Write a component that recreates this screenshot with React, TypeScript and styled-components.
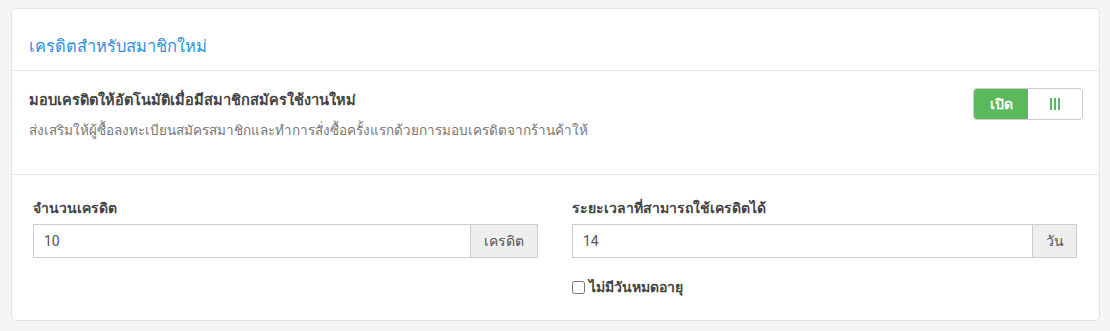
import styled, { createGlobalStyle } from 'styled-components';

const GlobalStyle = createGlobalStyle`
  body {
    margin: 0;
    background: #f5f5f5;
    font-family: "Noto Sans", "Open Sans", sans-serif;
    color: #444;
  }
`;

const Page = styled.div`
  padding: 8px 10px 10px 11px;
`;

const Card = styled.div`
  background: #fff;
  border: 1px solid #e3e3e3;
  border-radius: 5px;
`;

const Header = styled.div`
  height: 61px;
  display: flex;
  align-items: center;
  padding: 0 17px;
  border-bottom: 1px solid #e6e6e6;
`;

const Title = styled.h3`
  margin: 0;
  padding-top: 12px;
  font-size: 16.5px;
  font-weight: 500;
  color: #2f8fdd;
`;

const Section = styled.div`
  display: flex;
  justify-content: space-between;
  align-items: flex-start;
  height: 104px;
  box-sizing: border-box;
  padding: 17px 16px 0 17px;
  border-bottom: 1px solid #e6e6e6;
`;

const Texts = styled.div`
  display: flex;
  flex-direction: column;
  gap: 10px;
`;

const Strong = styled.div`
  font-size: 14.6px;
  font-weight: 700;
  color: #444;
  line-height: 22px;
`;

const Hint = styled.div`
  font-size: 13.5px;
  color: #777;
  line-height: 20px;
`;

const Toggle = styled.div`
  display: flex;
  width: 110px;
  height: 32px;
  border: 1px solid #ccc;
  border-radius: 4px;
  overflow: hidden;
  box-sizing: border-box;
`;

const ToggleOn = styled.div`
  width: 54px;
  background: #5cb85c;
  color: #fff;
  font-size: 14px;
  font-weight: 700;
  display: flex;
  align-items: center;
  justify-content: center;
`;

const ToggleOff = styled.div`
  flex: 1;
  display: flex;
  align-items: center;
  justify-content: center;
  gap: 2px;
`;

const Bar = styled.span`
  width: 2px;
  height: 12px;
  background: #5cb85c;
`;

const Fields = styled.div`
  display: grid;
  grid-template-columns: 1fr 1fr;
  column-gap: 34px;
  padding: 23px 22px 22px 21px;
`;

const Field = styled.div`
  display: flex;
  flex-direction: column;
`;

const Label = styled.label`
  font-size: 14px;
  font-weight: 700;
  color: #444;
  line-height: 20px;
  margin-bottom: 6px;
`;

const Group = styled.div`
  display: flex;
  height: 34px;
`;

const Input = styled.input`
  flex: 1;
  min-width: 0;
  box-sizing: border-box;
  height: 34px;
  border: 1px solid #ccc;
  border-right: none;
  padding: 0 10px;
  font-size: 14px;
  font-family: "Roboto", "Noto Sans", sans-serif;
  color: #555;
  outline: none;
`;

const Addon = styled.span<{ $w: number }>`
  width: ${(p) => p.$w}px;
  box-sizing: border-box;
  height: 34px;
  border: 1px solid #ccc;
  background: #eee;
  display: flex;
  align-items: center;
  justify-content: center;
  font-size: 14px;
  color: #555;
`;

const Check = styled.label`
  display: flex;
  align-items: center;
  gap: 4px;
  margin-top: 18px;
  font-size: 14px;
  font-weight: 700;
  color: #444;
  input {
    margin: 0;
    width: 13px;
    height: 13px;
  }
`;

export default function App() {
  return (
    <Page>
      <GlobalStyle />
      <Card>
        <Header>
          <Title>เครดิตสำหรับสมาชิกใหม่</Title>
        </Header>
        <Section>
          <Texts>
            <Strong>มอบเครดิตให้อัตโนมัติเมื่อมีสมาชิกสมัครใช้งานใหม่</Strong>
            <Hint>ส่งเสริมให้ผู้ซื้อลงทะเบียนสมัครสมาชิกและทำการสั่งซื้อครั้งแรกด้วยการมอบเครดิตจากร้านค้าให้</Hint>
          </Texts>
          <Toggle>
            <ToggleOn>เปิด</ToggleOn>
            <ToggleOff>
              <Bar />
              <Bar />
              <Bar />
            </ToggleOff>
          </Toggle>
        </Section>
        <Fields>
          <Field>
            <Label>จำนวนเครดิต</Label>
            <Group>
              <Input defaultValue="10" />
              <Addon $w={68}>เครดิต</Addon>
            </Group>
          </Field>
          <Field>
            <Label>ระยะเวลาที่สามารถใช้เครดิตได้</Label>
            <Group>
              <Input defaultValue="14" />
              <Addon $w={45}>วัน</Addon>
            </Group>
            <Check>
              <input type="checkbox" />
              ไม่มีวันหมดอายุ
            </Check>
          </Field>
        </Fields>
      </Card>
    </Page>
  );
}
